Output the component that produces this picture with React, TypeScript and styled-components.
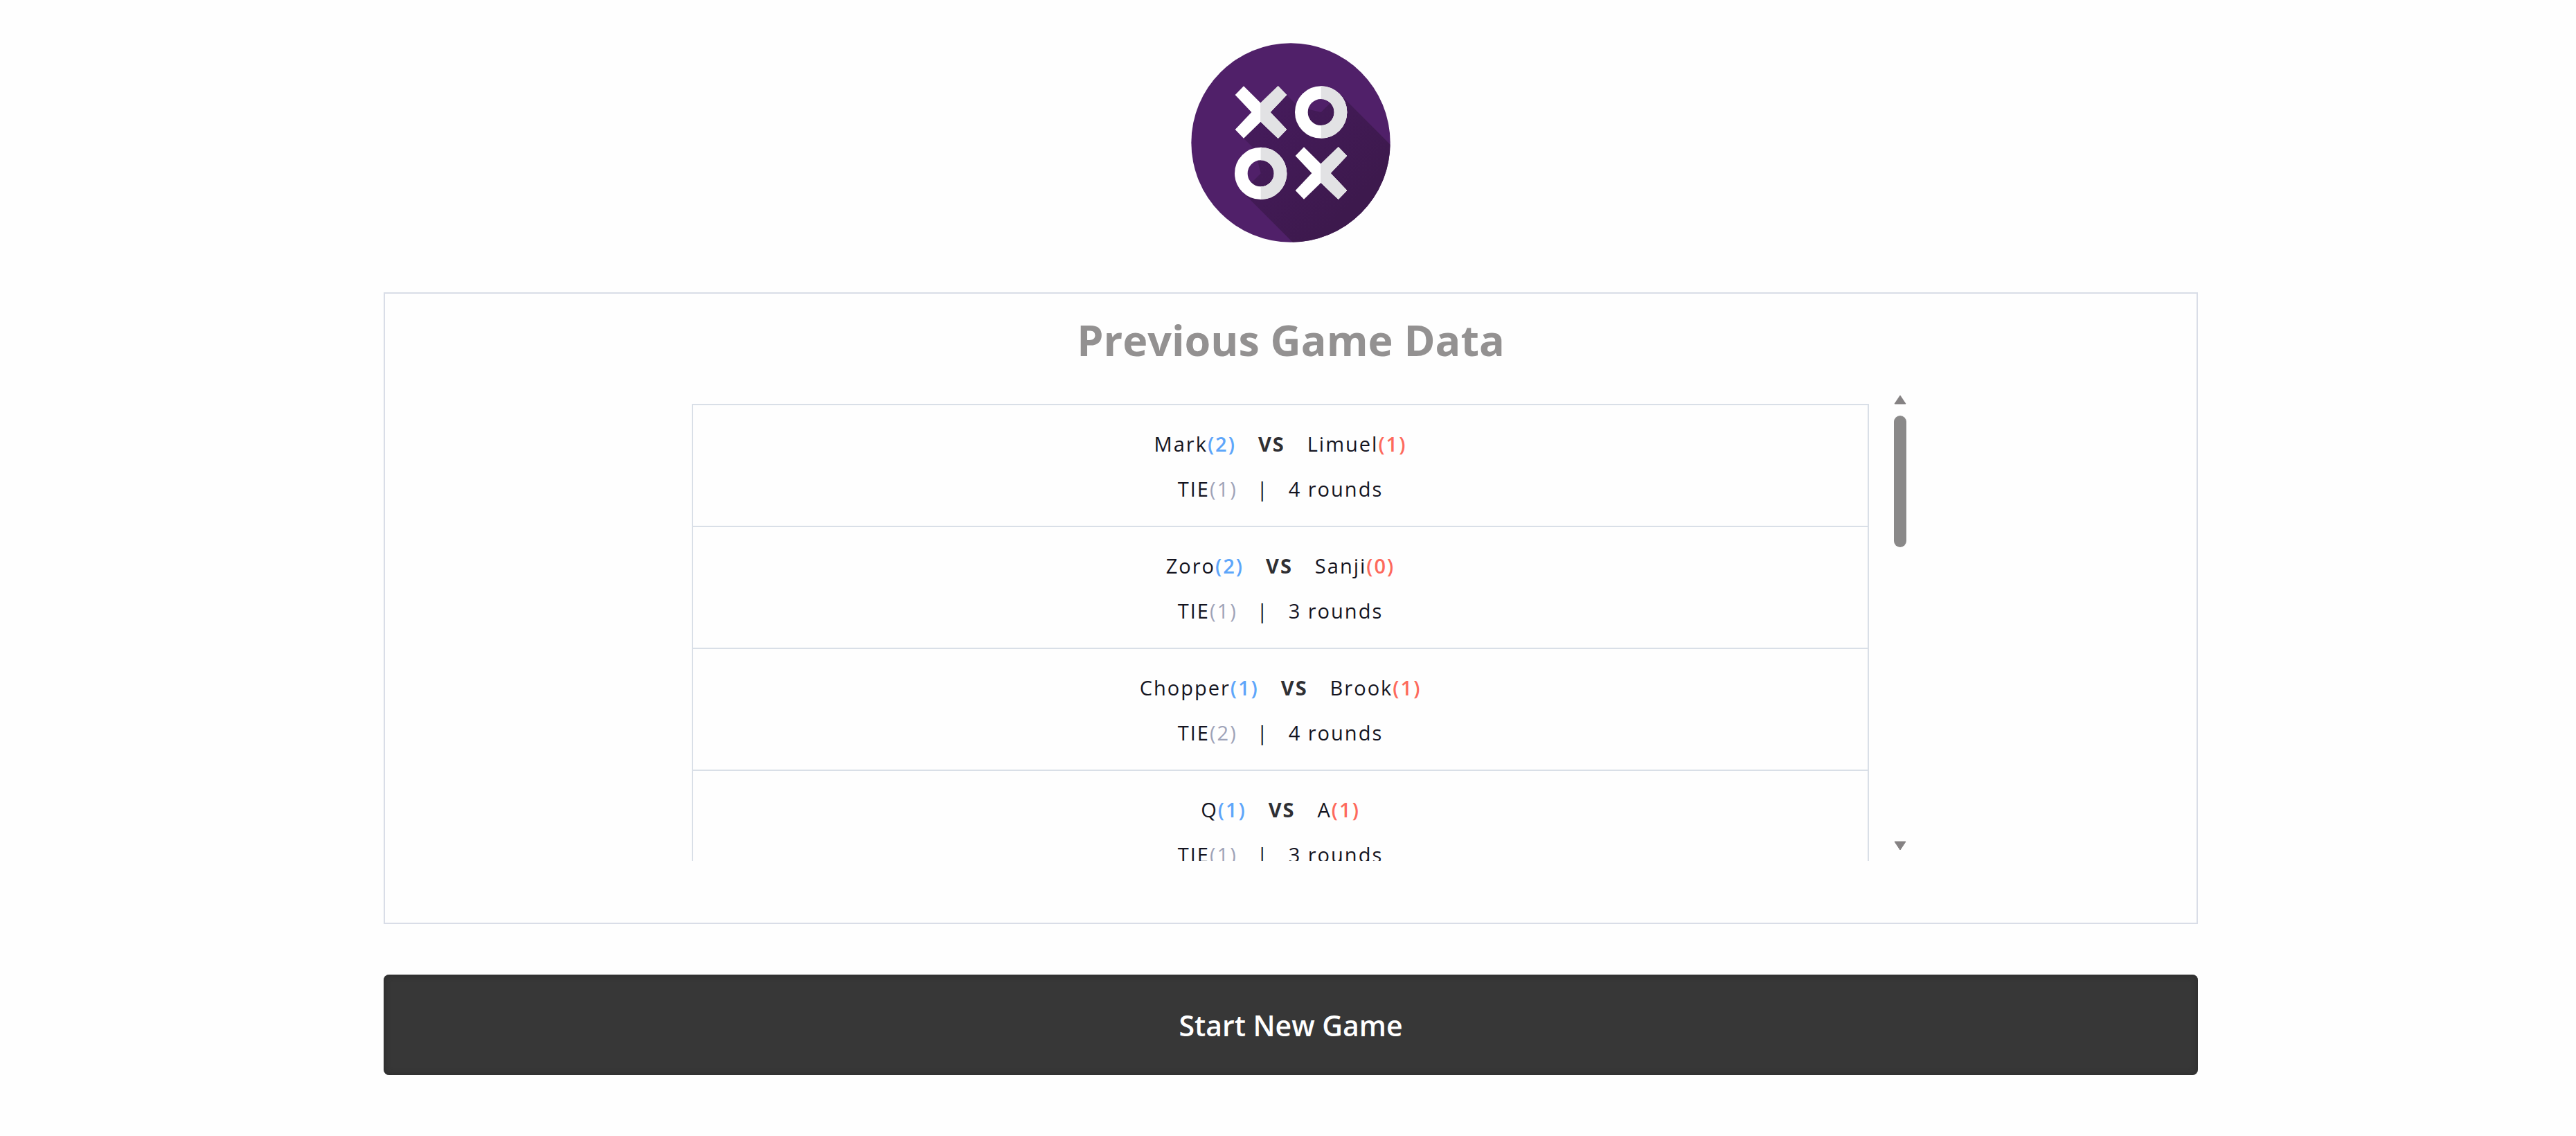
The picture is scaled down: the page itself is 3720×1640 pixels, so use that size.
import { useRef, useState } from "react";
import styled, { createGlobalStyle } from "styled-components";

const GlobalStyle = createGlobalStyle`
  *, *::before, *::after { box-sizing: border-box; }
  body {
    margin: 0;
    background: #fefefe;
    color: #14141f;
    font-family: "Segoe UI", "Open Sans", "Noto Sans", sans-serif;
  }
`;

const Page = styled.main`
  display: flex;
  flex-direction: column;
  align-items: center;
  padding: 62px 546px 88px 554px;
`;

const Logo = styled.svg`
  display: block;
  width: 288px;
  height: 288px;
`;

const Panel = styled.section`
  display: flex;
  flex-direction: column;
  align-items: center;
  width: 100%;
  margin-top: 72px;
  padding: 24px 0 89px;
  border: 2px solid #d9dde7;
`;

const Title = styled.h1`
  margin: 0 0 27px;
  font-size: 61px;
  line-height: 86px;
  font-weight: 700;
  color: #939191;
`;

const ScrollArea = styled.div`
  display: grid;
  grid-template-columns: 1fr 18px;
  column-gap: 36px;
  width: 68%;
  height: 682px;
  padding-left: 24px;
`;

const Games = styled.ul`
  margin: 0;
  padding: 22px 0 0;
  list-style: none;
  overflow-y: auto;
  scrollbar-width: none;
`;

const Game = styled.li`
  display: flex;
  flex-direction: column;
  align-items: center;
  padding: 23px 0 21px;
  border: 2px solid #d9dfe7;
  font-size: 29px;
  line-height: 65px;
  letter-spacing: 2px;

  & + & {
    margin-top: -2px;
  }
`;

const Line = styled.div<{ $gap: number }>`
  display: flex;
  gap: ${({ $gap }) => $gap}px;
`;

const Score = styled.span<{ $color: string; $bold?: boolean }>`
  color: ${({ $color }) => $color};
  font-weight: ${({ $bold }) => ($bold ? 600 : 400)};
`;

const Versus = styled.strong`
  font-weight: 700;
  color: #2f2f33;
`;

const ScrollBar = styled.div`
  display: flex;
  flex-direction: column;
  padding: 9px 0 15px;
`;

const Arrow = styled.button`
  display: block;
  width: 18px;
  height: 14px;
  padding: 0;
  border: 0;
  background: none;
  color: #858283;
  cursor: pointer;

  svg { display: block; }
`;

const Track = styled.div`
  flex: 1;
  padding: 16px 0;
`;

const Thumb = styled.div`
  height: 190px;
  border-radius: 9px;
  background: #8a8989;
`;

const StartButton = styled.button`
  width: 100%;
  height: 145px;
  margin-top: 73px;
  border: 0;
  border-radius: 8px;
  background: #373737;
  box-shadow: inset 0 0 8px #2a2a2a;
  color: #fff;
  font: inherit;
  font-size: 41px;
  font-weight: 600;
  cursor: pointer;
`;

type GameData = {
  first: string;
  firstWins: number;
  second: string;
  secondWins: number;
  ties: number;
  rounds: number;
};

const games: GameData[] = [
  { first: "Mark", firstWins: 2, second: "Limuel", secondWins: 1, ties: 1, rounds: 4 },
  { first: "Zoro", firstWins: 2, second: "Sanji", secondWins: 0, ties: 1, rounds: 3 },
  { first: "Chopper", firstWins: 1, second: "Brook", secondWins: 1, ties: 2, rounds: 4 },
  { first: "Q", firstWins: 1, second: "A", secondWins: 1, ties: 1, rounds: 3 },
];

const cross =
  "M-74 -113L0 -40L75 -113L112 -75L41 0L112 75L75 113L0 41L-74 113L-111 75L-40 0L-111 -75Z";
const crossRight = "M0 -40L75 -113L112 -75L41 0L112 75L75 113L0 41Z";
const ringRight = "M0 -113A113 113 0 0 1 0 113V57A57 57 0 0 0 0 -57Z";

function Cross({ x, y }: { x: number; y: number }) {
  return (
    <g transform={`translate(${x} ${y})`} strokeLinejoin="round" strokeWidth="3">
      <path d={cross} fill="#fff" />
      <path d={crossRight} fill="#e2e2e4" stroke="#e2e2e4" />
    </g>
  );
}

function Ring({ x, y }: { x: number; y: number }) {
  return (
    <g transform={`translate(${x} ${y})`}>
      <circle r="85" fill="none" stroke="#fff" strokeWidth="56" />
      <path d={ringRight} fill="#e2e2e4" />
    </g>
  );
}

function GameLogo() {
  return (
    <Logo viewBox="59 65 864 864" role="img" aria-label="Tic tac toe">
      <defs>
        <clipPath id="disc">
          <circle cx="491" cy="497" r="431" />
        </clipPath>
        <linearGradient id="shade" gradientUnits="userSpaceOnUse" x1="361" y1="365" x2="760" y2="760">
          <stop offset="0" stopColor="#451b5b" />
          <stop offset="1" stopColor="#3d194d" />
        </linearGradient>
      </defs>
      <circle cx="491" cy="497" r="431" fill="#502069" />
      <path
        clipPath="url(#disc)"
        fill="url(#shade)"
        d="M361 365L473 290L525 342L622 365L702 285L1000 583V1000L852 1281L281 710L361 630L335 526L287 478Z"
      />
      <Cross x={361} y={365} />
      <Ring x={622} y={365} />
      <Ring x={361} y={630} />
      <Cross x={622} y={629} />
    </Logo>
  );
}

export default function App() {
  const list = useRef<HTMLUListElement>(null);
  const track = useRef<HTMLDivElement>(null);
  const [offset, setOffset] = useState(0);

  const handleScroll = () => {
    if (!list.current || !track.current) return;
    const { scrollTop, scrollHeight, clientHeight } = list.current;
    const room = track.current.clientHeight - 222;
    setOffset((scrollTop / Math.max(1, scrollHeight - clientHeight)) * room);
  };

  const scrollBy = (top: number) => list.current?.scrollBy({ top, behavior: "smooth" });

  return (
    <>
      <GlobalStyle />
      <Page>
        <GameLogo />
        <Panel>
          <Title>Previous Game Data</Title>
          <ScrollArea>
            <Games ref={list} onScroll={handleScroll}>
              {games.map((game) => (
                <Game key={game.first}>
                  <Line $gap={32}>
                    <span>
                      {game.first}
                      <Score $color="#5ea6fa" $bold>({game.firstWins})</Score>
                    </span>
                    <Versus>VS</Versus>
                    <span>
                      {game.second}
                      <Score $color="#fd6a5c" $bold>({game.secondWins})</Score>
                    </span>
                  </Line>
                  <Line $gap={28}>
                    <span>
                      TIE
                      <Score $color="#9ea3b8">({game.ties})</Score>
                    </span>
                    <span>|</span>
                    <span>{game.rounds} rounds</span>
                  </Line>
                </Game>
              ))}
            </Games>
            <ScrollBar>
              <Arrow type="button" aria-label="Scroll up" onClick={() => scrollBy(-176)}>
                <svg width="18" height="14" viewBox="0 0 18 14">
                  <path d="M9 1L17 13H1Z" fill="currentColor" stroke="currentColor" strokeLinejoin="round" />
                </svg>
              </Arrow>
              <Track ref={track}>
                <Thumb style={{ transform: `translateY(${offset}px)` }} />
              </Track>
              <Arrow type="button" aria-label="Scroll down" onClick={() => scrollBy(176)}>
                <svg width="18" height="14" viewBox="0 0 18 14">
                  <path d="M9 13L1 1H17Z" fill="currentColor" stroke="currentColor" strokeLinejoin="round" />
                </svg>
              </Arrow>
            </ScrollBar>
          </ScrollArea>
        </Panel>
        <StartButton type="button">Start New Game</StartButton>
      </Page>
    </>
  );
}
